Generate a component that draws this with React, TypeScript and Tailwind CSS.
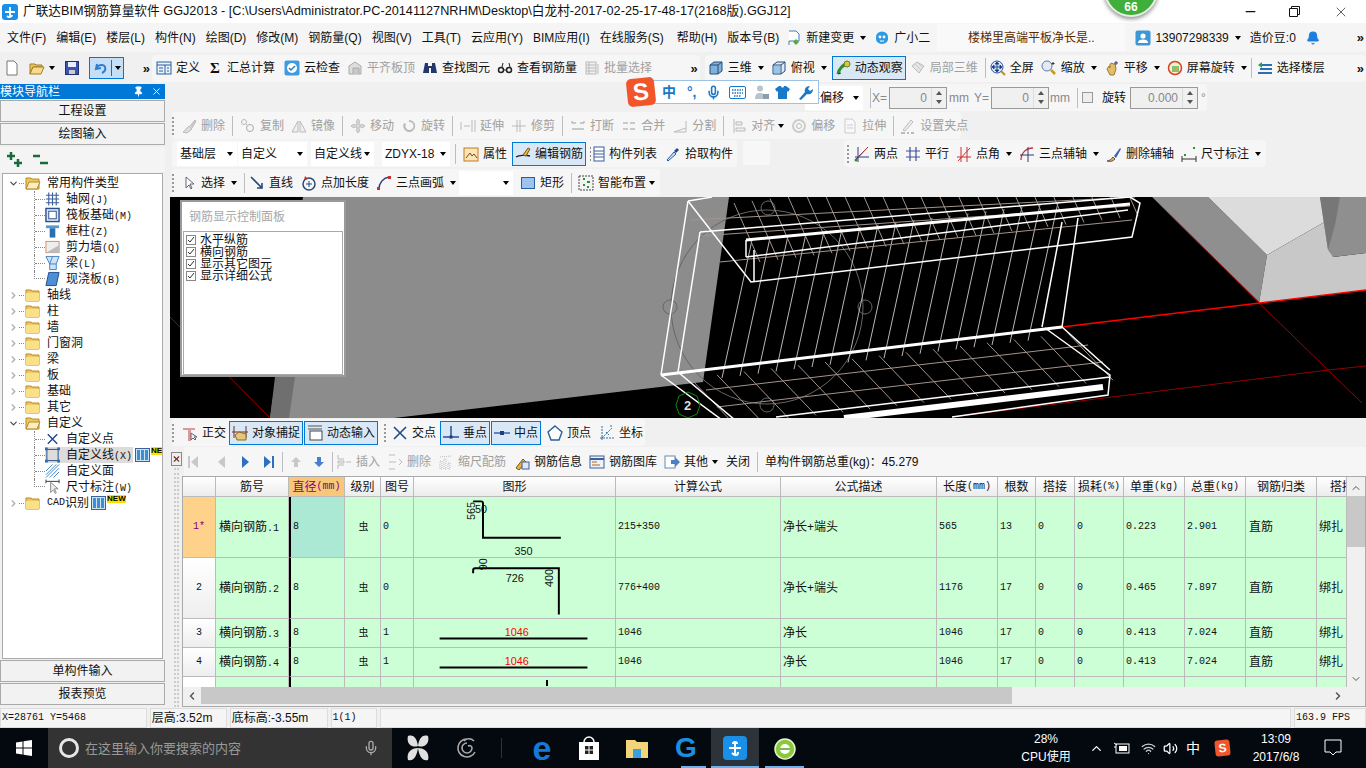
import type { ReactNode } from "react";
import { X, Minus, Pin, ChevronRight, ChevronDown, ChevronUp, ChevronLeft, Mic, Bell, Wifi, Volume2 } from "lucide-react";

const ic: Record<string, ReactNode> = {
  new: <path d="M3 1h7l3 3v11H3z" fill="#fff" stroke="#777" />,
  open: <><path d="M1 4h5l1 1h6v2H4l-3 7z" fill="#e9c46a" stroke="#a67c1e" /><path d="M4 7h11l-3 7H1z" fill="#f6dc8c" stroke="#a67c1e" /></>,
  save: <><rect x="1.5" y="1.5" width="13" height="13" fill="#3a55b0" stroke="#1f2f70" /><rect x="4" y="2" width="8" height="5" fill="#e8eefc" /><rect x="5" y="10" width="6" height="4" fill="#ccc" /></>,
  undo: <path d="M4 4l-1 5 5-1M3.5 8.5C5 4 11 4 12 7c1 3-1 5-3 6" fill="none" stroke="#2f7fd0" strokeWidth="2" />,
  def: <><rect x="1" y="2" width="14" height="12" fill="#eaf2fb" stroke="#2a5f9e" /><path d="M1 5h14M9 5v9M3 8h4M3 11h4M11 8h2M11 11h2" stroke="#2a5f9e" /></>,
  cloud: <><rect x="0.5" y="0.5" width="15" height="15" rx="2" fill="#3f9be0" /><circle cx="8" cy="8" r="5" fill="#fff" /><path d="M5 8l2 2 4-4" fill="none" stroke="#2a7fc0" strokeWidth="1.5" /></>,
  alignG: <><path d="M2 14V6l6-4 6 4v8z" fill="#ddd" stroke="#aaa" /><path d="M6 14V8h6v6" fill="#c8c8c8" stroke="#aaa" /></>,
  binoc: <><path d="M3 3h3v3h4V3h3l2 10H9V8H7v5H1z" fill="#24386e" /></>,
  glasses: <><circle cx="4" cy="10" r="2.5" fill="none" stroke="#222" strokeWidth="1.5" /><circle cx="12" cy="10" r="2.5" fill="none" stroke="#222" strokeWidth="1.5" /><path d="M6.5 10h3M5 7l1-4M13 7l-1-4" stroke="#222" /></>,
  batch: <><rect x="2" y="2" width="10" height="12" fill="#eee" stroke="#bbb" /><path d="M2 5h10M2 8h10M2 11h10M5 2v12M14 4v10" stroke="#bbb" /></>,
  cube: <><path d="M2 5l4-3h8v9l-4 3H2z" fill="#7fb2da" stroke="#284d78" /><path d="M2 5h8v9M10 5l4-3" fill="none" stroke="#284d78" /></>,
  top: <><path d="M2 5l4-3h8v9l-4 3H2z" fill="#dcebf7" stroke="#284d78" /><path d="M2 5h8v9M10 5l4-3" fill="none" stroke="#284d78" /><path d="M3 6h6v7H3z" fill="#9cc4e4" /></>,
  orbit: <><path d="M3 14c1-5 5-9 10-11" fill="none" stroke="#2f8f2f" strokeWidth="3" /><circle cx="12" cy="4" r="3" fill="#d6c93a" stroke="#6b7a1e" /><path d="M3 14l3-1" stroke="#143" /></>,
  local: <><path d="M2 6l5-4 7 4-5 7z" fill="#e5e5e5" stroke="#bbb" /><path d="M5 4l6 6M8 3l5 5" stroke="#ccc" /></>,
  full: <><circle cx="7" cy="7" r="6" fill="#dbe7f7" stroke="#2a4f9a" /><path d="M7 2v10M2 7h10M7 2L5 4h4zM7 12l-2-2h4zM2 7l2-2v4zM12 7l-2-2v4z" stroke="#2a4f9a" /><path d="M11 11l4 4" stroke="#c88a1e" strokeWidth="2" /></>,
  zoom: <><circle cx="6" cy="6" r="5" fill="#e4eaf3" stroke="#5a7ca8" /><path d="M10 10l4 4" stroke="#c89a1e" strokeWidth="2.5" /><path d="M12 2v3M10.5 3.5h3" stroke="#333" /></>,
  pan: <><path d="M3 9l2-3 1 2V4l2-1 1 1 2 0 1 5-2 6H6z" fill="#e3bd6e" stroke="#9a7a30" /><path d="M12 1v4M10 3h4" stroke="#2a3f7a" /></>,
  rot: <><circle cx="8" cy="8" r="6.5" fill="#f6f2c4" stroke="#d8402a" strokeWidth="1.5" /><rect x="5" y="6" width="7" height="6" fill="#7cc47c" /><path d="M9 7l2 2-4 2z" fill="#e8a23a" /></>,
  layer: <><path d="M1 13h14M3 9h12M5 5h10" stroke="#2a6fb0" strokeWidth="2" /><path d="M5 2L1 5l4 3z" fill="#2f9f4f" /></>,
  docG: <><path d="M3 1h7l3 3v7H3v4" fill="#fff" stroke="#3d7fc2" /><path d="M7 12l3-3 3 3-3 3z" fill="#5aa93a" /></>,
  bot: <><path d="M2 7a6 5.5 0 0 1 12 0v2a6 5 0 0 1-12 0z" fill="#2d9be3" /><circle cx="6" cy="7" r="1.4" fill="#fff" /><circle cx="10" cy="7" r="1.4" fill="#fff" /><path d="M6 11h4" stroke="#fff" /></>,
  user: <><rect x="0.5" y="0.5" width="15" height="15" rx="2" fill="#3d96d6" /><circle cx="8" cy="6" r="2.6" fill="#fff" /><path d="M3 13c0-3 3-3.5 5-3.5s5 .5 5 3.5z" fill="#fff" /></>,
  del: <><path d="M2 14l6-6 3 3-5 4z" fill="#ddd" stroke="#bbb" /><path d="M9 8l5-6 1 1-4 7" fill="#ccc" stroke="#bbb" /></>,
  copy: <><circle cx="4" cy="4" r="2.5" fill="none" stroke="#bbb" /><circle cx="10" cy="10" r="3.5" fill="none" stroke="#aaa" /><path d="M6 6l2 2" stroke="#bbb" /></>,
  mirror: <><path d="M7 3v11H1zM9 3v11h6z" fill="#eee" stroke="#bbb" /></>,
  move: <path d="M8 1l2 3H9v3h3V6l3 2-3 2V9H9v3h1l-2 3-2-3h1V9H4v1L1 8l3-2v1h3V4H6z" fill="#ddd" stroke="#bbb" />,
  rotG: <path d="M8 2a6 6 0 1 1-5 3l2 1a4 4 0 1 0 3-2z" fill="#bbb" />,
  extend: <path d="M1 4v8M4 8h6M12 2v12M15 2v12" stroke="#bbb" fill="none" />,
  trim: <path d="M1 8h14M6 2v12M9 2v12" stroke="#bbb" fill="none" />,
  breakI: <path d="M2 5h4M10 5h4M2 11h12M2 5V3M14 5V3" stroke="#bbb" strokeWidth="1.5" fill="none" />,
  merge: <path d="M2 5h5M9 5h5M2 11h5M9 11h5" stroke="#bbb" strokeWidth="1.5" fill="none" />,
  split: <path d="M2 14l12-4M2 14h12V3" stroke="#bbb" fill="none" />,
  alignL: <path d="M3 1v14M5 4h6v3H5zM5 10h9v3H5z" stroke="#bbb" fill="#eee" />,
  offs: <><circle cx="8" cy="8" r="6" fill="none" stroke="#ccc" strokeWidth="2" /><circle cx="8" cy="8" r="2.5" fill="none" stroke="#bbb" /></>,
  stretch: <path d="M3 1h7l3 3v11H3zM5 7h6M5 10h6" stroke="#ccc" fill="#f8f8f8" />,
  grips: <><path d="M3 12l8-10 2 2-8 9z" fill="#eee" stroke="#bbb" /><path d="M1 15h4M7 15h2M11 15h3" stroke="#bbb" strokeWidth="2" /></>,
  prop: <><rect x="1" y="2" width="14" height="13" fill="#fbe6b8" stroke="#c07a1e" /><path d="M3 12l4-5 2 3 2-2 3 4" fill="none" stroke="#7a4a10" /></>,
  edit: <><path d="M1 11c3-2 10-2 14-1" fill="none" stroke="#222" strokeWidth="1.5" /><path d="M8 9l5-7 2 1-4 7z" fill="#e2b53c" stroke="#7a5a10" /></>,
  list: <><path d="M1 2h2M1 6h2M1 10h2M1 14h2" stroke="#666" strokeWidth="1.5" strokeDasharray="1 1" /><rect x="5" y="1" width="10" height="14" fill="#fff" stroke="#3d5f9a" /><path d="M5 5h10M5 8h10M5 11h10" stroke="#3d5f9a" /></>,
  pick: <><path d="M2 14l7-8 2 2-8 7z" fill="#cfe3f7" stroke="#2a5f9e" /><path d="M9 5l3-3 2 2-3 3z" fill="#1f4a8a" /></>,
  two: <><path d="M1 14L14 1M1 11h14M4 1v15" stroke="#2a3f7a" /><path d="M1 15L13 2" stroke="#c83030" /><circle cx="2" cy="14" r="1.5" fill="#2f8f2f" /></>,
  para: <path d="M1 5h14M1 11h14M5 1v14M11 1v14" stroke="#3d4f9a" strokeWidth="1.2" fill="none" />,
  ang: <path d="M1 11h14M5 1v15M11 1v15M2 15L14 2" stroke="#c83030" strokeWidth="1" fill="none" />,
  arc3: <><path d="M2 14C2 7 7 2 14 2" stroke="#c83030" fill="none" strokeWidth="1.3" /><path d="M1 9h14M9 1v15" stroke="#2a3f7a" /></>,
  delAx: <><path d="M1 15c3 0 4-2 6-4l2 2c-2 2-4 3-8 2z" fill="#e6b04a" stroke="#555" /><path d="M8 10l6-8 1 1-5 9z" fill="#3a64b0" /></>,
  dim: <><path d="M1 13h14M1 10v6M15 10v6" stroke="#333" /><rect x="3" y="8" width="2" height="2" fill="#2f8f2f" /><rect x="12" y="1" width="2" height="2" fill="#2f8f2f" /></>,
  pointer: <path d="M5 2v11l3-3 2 4 1-1-2-4h4z" fill="#fff" stroke="#667" />,
  line: <path d="M2 2l11 11M13 8v5H8" stroke="#234a7a" strokeWidth="1.6" fill="none" />,
  addLen: <><circle cx="8" cy="9" r="6" fill="none" stroke="#234a7a" strokeWidth="1.5" /><path d="M5 9h6M8 6v6" stroke="#234a7a" /><path d="M4 1l3 3-4 1z" fill="#c83030" /></>,
  arc: <><path d="M3 14C3 8 7 3 13 2" stroke="#2a3f7a" fill="none" strokeWidth="1.5" /><rect x="1" y="12" width="3" height="3" fill="#c83030" /><rect x="12" y="1" width="3" height="3" fill="#c83030" /></>,
  rect: <rect x="1.5" y="2.5" width="13" height="11" fill="#9dc3ee" stroke="#2a5f9e" />,
  smart: <><rect x="1" y="1" width="14" height="14" fill="#f3f3f3" stroke="#444" strokeDasharray="2 1" /><path d="M5 4h2M9 7h3M5 10h2M9 12h2" stroke="#2f8f2f" strokeWidth="2" /></>,
  ortho: <><path d="M1 3h12v2H9v11H6V5H1z" fill="#d99a9a" /><path d="M9 8v7l2-2 2 2 1-1-2-2h3z" fill="#eef" stroke="#667" /></>,
  snap: <><path d="M2 1v12M14 1v12M0 7h16" stroke="#7a2a20" /><path d="M3 10l4-3 7 2v6H5z" fill="#e5c67a" stroke="#8a6a20" /></>,
  dyn: <><path d="M1 4h14M1 1h14" stroke="#555" /><rect x="3" y="6" width="12" height="9" fill="#fff" stroke="#444" /></>,
  cross: <path d="M2 2l12 12M14 2L2 14" stroke="#1f4a8a" strokeWidth="1.6" />,
  perp: <><path d="M0 12h16" stroke="#2a4f9a" strokeWidth="1.5" /><path d="M8 1v11" stroke="#2a4f9a" strokeWidth="1.5" /><rect x="6.5" y="10.5" width="3" height="3" fill="#1f3f7a" /></>,
  mid: <><path d="M0 8h16" stroke="#3a64b0" strokeWidth="1.5" /><rect x="6" y="6" width="4" height="4" fill="#1f3f7a" /></>,
  vertex: <path d="M8 1l7 6-3 8H4L1 7z" fill="#fff" stroke="#2a5f9e" strokeWidth="1.4" />,
  coord: <path d="M3 1v14M1 13h14M3 13L13 3M11 1h3M7 7l3 3" stroke="#2a6fb0" strokeDasharray="2 1" fill="none" />,
  info: <><path d="M2 14l7-9 3 3-7 8z" fill="#e5b04a" stroke="#7a5a10" /><rect x="8" y="8" width="7" height="7" fill="#dde8f5" stroke="#3d5f9a" /></>,
  lib: <><rect x="1" y="2" width="14" height="12" fill="#eaf2fb" stroke="#3d5f9a" /><path d="M1 5h14" stroke="#3d5f9a" strokeWidth="2" /><path d="M3 8h5M3 11h8" stroke="#b5651d" /></>,
  other: <><rect x="1" y="2" width="10" height="12" fill="#fff" stroke="#6b8ab0" /><path d="M7 6h4V3l5 5-5 5v-3H7z" fill="#4a7fc0" /></>,
  ins: <path d="M2 1v4h6M2 15v-4h6M10 8h5M2 7h6v2H2z" stroke="#bbb" fill="none" />,
  rem: <path d="M2 1h6M2 15h6M2 8h7M12 5l3 3-3 3" stroke="#bbb" fill="none" />,
  scale: <path d="M2 15V7h2v8zM6 15V5h2v10zM10 15V9h2v6zM2 3l11-1" stroke="#bbb" fill="none" strokeDasharray="1 1" />,
};

const Ic = ({ n }: { n: string }) => (
  <svg width="16" height="16" viewBox="0 0 16 16" className="shrink-0">{ic[n]}</svg>
);

const Caret = ({ className = "" }: { className?: string }) => (
  <span className={`inline-block shrink-0 border-x-[3px] border-t-[4px] border-x-transparent border-t-black ${className}`} />
);

const Sep = ({ className = "" }: { className?: string }) => <span className={`h-[20px] w-px shrink-0 bg-[#bdbdbd] ${className}`} />;

const Grip = ({ className = "" }: { className?: string }) => <span className={`h-[18px] w-[3px] shrink-0 border-l-2 border-dotted border-[#999] ${className}`} />;

function T({ i, t, off, on, caret, tight, className = "" }: { i?: string; t: string; off?: boolean; on?: boolean; caret?: boolean; tight?: boolean; className?: string }) {
  return (
    <div
      className={`flex shrink-0 items-center gap-[4px] whitespace-nowrap ${off ? "text-[#a0a0a0]" : "text-[#111]"} ${on ? "h-[24px] border border-[#0078d7] bg-[#d9e8f6] px-[2px]" : ""} ${className}`}
    >
      {i && <Ic n={i} />}
      <span>{t}</span>
      {caret && <Caret className={tight ? "-ml-[1px]" : "ml-[2px]"} />}
    </div>
  );
}

function Bar({ children, className = "" }: { children: ReactNode; className?: string }) {
  return <div className={`flex h-[27px] items-center gap-[7px] rounded-sm bg-[#f6f6f6] ${className}`}>{children}</div>;
}

function Select({ w, t }: { w: string; t?: string }) {
  return (
    <div className={`flex h-[24px] shrink-0 items-center justify-between bg-white pl-[3px] pr-[4px] ${w}`}>
      <span className="whitespace-nowrap">{t}</span>
      <Caret />
    </div>
  );
}

function Num({ w, v }: { w: string; v: string }) {
  return (
    <div className={`flex h-[22px] shrink-0 items-center justify-end border border-[#999] bg-[#f0f0f0] text-[#888] ${w}`}>
      <span className="mr-[4px]">{v}</span>
      <span className="flex h-full w-[15px] flex-col items-center justify-center gap-[5px] border-l border-[#ddd]">
        <span className="border-x-[3px] border-b-[4px] border-x-transparent border-b-[#555]" />
        <span className="border-x-[3px] border-t-[4px] border-x-transparent border-t-[#555]" />
      </span>
    </div>
  );
}

const mono = "font-['Liberation_Mono','Noto_Sans_CJK_SC',monospace] text-[10px]";

function Folder({ open }: { open?: boolean }) {
  return (
    <svg width="16" height="16" viewBox="0 0 16 16" className="shrink-0">
      <path d="M1 3h5l1 1h7v10H1z" fill="#f0c85a" stroke="#b58a2a" />
      {open ? <path d="M4 7h11l-3 7H1z" fill="#fbeec0" stroke="#b58a2a" /> : <path d="M1 6h13v8H1z" fill="#f9e08c" />}
    </svg>
  );
}

function GridBadge() {
  return (
    <span className="ml-[2px] flex h-[14px] w-[15px] shrink-0 gap-px border border-[#3d5f9a] bg-[#cfe3f7] p-[1px]">
      <span className="flex-1 bg-[#3d8fd0]" />
      <span className="flex-1 bg-[#3d8fd0]" />
      <span className="flex-1 bg-[#3d8fd0]" />
    </span>
  );
}

function Branch({ label, open, children }: { label: ReactNode; open?: boolean; children?: ReactNode }) {
  return (
    <div>
      <div className="flex h-[16px] items-center">
        {open ? <ChevronDown size={11} className="ml-[5px] text-[#444]" strokeWidth={2.5} /> : <ChevronRight size={11} className="ml-[5px] text-[#aaa]" strokeWidth={2.5} />}
        <span className="mr-[1px] w-[5px] border-t border-dotted border-[#888]" />
        <Folder open={open} />
        <span className="ml-[6px] flex items-center whitespace-nowrap">{label}</span>
      </div>
      {children}
    </div>
  );
}

function Leaf({ n, t, k, last, sel, after }: { n: ReactNode; t: string; k?: string; last?: boolean; sel?: boolean; after?: ReactNode }) {
  return (
    <div className="flex h-[16px] items-center pl-[31px]">
      {last ? (
        <span className="h-[8px] w-[11px] shrink-0 self-start border-b border-l border-dotted border-[#888]" />
      ) : (
        <span className="h-full w-[11px] shrink-0 border-l border-dotted border-[#888]">
          <span className="mt-[8px] block border-t border-dotted border-[#888]" />
        </span>
      )}
      <div className={`flex h-full items-center ${sel ? "bg-[#dcdcdc]" : ""}`}>
        <span className="w-[15px] shrink-0">{n}</span>
        <span className="ml-[6px] whitespace-nowrap pr-[1px]">
          {t}
          {k && <span className={mono}>({k})</span>}
        </span>
      </div>
      {after}
    </div>
  );
}

const leafIc: Record<string, ReactNode> = {
  grid: <path d="M1 4h14M1 8h14M1 12h14M4 1v14M8 1v14M12 1v14" stroke="#3d5f9a" strokeWidth="1.2" />,
  raft: <><rect x="1" y="1" width="14" height="14" fill="#d4e6f7" stroke="#2a4f8a" strokeWidth="1.5" /><rect x="4" y="4" width="8" height="8" fill="#fff" stroke="#2a4f8a" /></>,
  col: <><path d="M1 2h14v3H1z" fill="#5a96d0" /><path d="M5 5h6v10H5z" fill="#2a6fb0" /></>,
  wall: <><rect x="1" y="2" width="14" height="12" fill="#eee" stroke="#d9895a" /><path d="M1 14l14-8v8z" fill="#bbb" /></>,
  beam: <><path d="M1 1h14l-3 8v6H5V9z" fill="#cfe3f7" stroke="#3d7fc2" /><path d="M5 9h7M8 1l-3 8" stroke="#3d7fc2" /></>,
  slab: <path d="M4 1h11l-3 14H1z" fill="#4d8fd6" stroke="#1f4a8a" />,
  pt: <path d="M3 3l10 10M13 3L3 13" stroke="#1f4a8a" strokeWidth="1.5" />,
  ln: <><rect x="2" y="2" width="12" height="12" fill="none" stroke="#1f4a8a" /><path d="M0 0h3v3H0zM13 0h3v3h-3zM0 13h3v3H0zM13 13h3v3h-3z" fill="#2a6fb0" /></>,
  face: <path d="M1 8l7-7M1 12L12 1M1 15L15 1M5 15L15 5M9 15l6-6" stroke="#3d7fc2" />,
  dm: <><path d="M1 2h14M1 0v4M15 0v4" stroke="#333" /><path d="M6 3v11l3-3 2 4 1-1-2-4h4z" fill="#eee" stroke="#888" /></>,
};
const L = ({ n }: { n: string }) => <svg width="15" height="16" viewBox="0 0 16 16">{leafIc[n]}</svg>;

const NewTag = ({ t }: { t: string }) => (
  <span className="mb-[8px] ml-[1px] overflow-hidden bg-[#ffe000] text-[8px] font-bold leading-[8px] text-black">{t}</span>
);

function Nav() {
  const btn = "flex h-[22px] shrink-0 items-center justify-center border border-[#aaa] bg-[#f2f2f2]";
  return (
    <div className="flex h-full w-[165px] shrink-0 flex-col gap-[1px] pb-[2px]">
      <div className="flex h-[15px] items-center justify-between bg-[#0078d7] pr-[3px] text-white">
        <span>模块导航栏</span>
        <span className="flex items-center gap-[7px]">
          <Pin size={11} fill="#fff" />
          <X size={11} />
        </span>
      </div>
      <div className={btn}>工程设置</div>
      <div className={btn}>绘图输入</div>
      <div className="mt-[1px] flex h-[25px] items-center gap-[8px] bg-[#f4f4f4] pl-[6px]">
        <svg width="18" height="16" viewBox="0 0 18 16"><path d="M1 4h8M5 0v8M8 11h8M12 7v8" stroke="#1a6b3a" strokeWidth="2.5" /></svg>
        <svg width="18" height="16" viewBox="0 0 18 16"><path d="M1 4h7M8 11h8" stroke="#1a6b3a" strokeWidth="2.5" /></svg>
      </div>
      <div className="mx-[2px] min-h-0 flex-1 overflow-hidden border border-[#aaa] bg-white pt-[1px]">
        <Branch label="常用构件类型" open />
        <Leaf n={<L n="grid" />} t="轴网" k="J" />
        <Leaf n={<L n="raft" />} t="筏板基础" k="M" />
        <Leaf n={<L n="col" />} t="框柱" k="Z" />
        <Leaf n={<L n="wall" />} t="剪力墙" k="Q" />
        <Leaf n={<L n="beam" />} t="梁" k="L" />
        <Leaf n={<L n="slab" />} t="现浇板" k="B" last />
        {["轴线", "柱", "墙", "门窗洞", "梁", "板", "基础", "其它"].map((x) => (
          <Branch key={x} label={x} />
        ))}
        <Branch label="自定义" open />
        <Leaf n={<L n="pt" />} t="自定义点" />
        <Leaf n={<L n="ln" />} t="自定义线" k="X" sel after={<><GridBadge /><NewTag t="NE" /></>} />
        <Leaf n={<L n="face" />} t="自定义面" />
        <Leaf n={<L n="dm" />} t="尺寸标注" k="W" last />
        <Branch label={<><span className={mono}>CAD</span>识别<GridBadge /><NewTag t="NEW" /></>} />
      </div>
      <div className={btn}>单构件输入</div>
      <div className={btn}>报表预览</div>
    </div>
  );
}

function Scene() {
  const wire = "#fff";
  const tan = "#a3948b";
  return (
    <svg className="block h-[221px] w-full" viewBox="170 197 1196 221" preserveAspectRatio="none">
      <rect x="170" y="197" width="1196" height="221" fill="#000" />
      <path d="M303 197H729L703 382L394 418H270z" fill="#8c8c8c" />
      <path d="M275 377L270 418H289L295 377z" fill="#6f6f6f" />
      <path d="M1152 197H1208L1267 255L1259 303z" fill="#8f8f8f" />
      <path d="M1208 197H1320L1328 220L1267 255z" fill="#dcdcdc" />
      <path d="M1267 255L1328 220L1333 257L1366 253V290L1259 303z" fill="#c8c8c8" />
      <path d="M1320 197H1366V253L1333 257L1328 250z" fill="#8f8f8f" />
      <path d="M1320 197H1340L1335 225L1328 250z" fill="#777" />
      <path d="M170 317L270 418" stroke="#a00000" />
      <path d="M1152 197L1259 303L1362 403" stroke="#a00000" />
      <path d="M952 417L1328 370L1366 366" stroke="#900000" />
      <path d="M1062 327L1366 290" stroke="#ff0000" strokeWidth="1.5" />

      <g stroke="#666" fill="none">
        <ellipse cx="767" cy="307" rx="96" ry="97" />
        <circle cx="670" cy="307" r="7" />
        <circle cx="865" cy="307" r="7" />
        <circle cx="767" cy="405" r="7" />
        <circle cx="768" cy="208" r="7" />
      </g>

      <g stroke="#bdb6b1">
        {Array.from({ length: 18 }, (_, i) => (
          <line key={i} x1={722 + i * 18} y1={378 - i * 2.2} x2={752 + i * 18} y2={240 - i * 2.2} />
        ))}
      </g>
      <g stroke={tan}>
        {Array.from({ length: 22 }, (_, i) => (
          <line key={i} x1={734 + i * 18} y1={203 - i * 2.2} x2={760 + i * 18} y2={262 - i * 2.2} />
        ))}
        {Array.from({ length: 15 }, (_, i) => (
          <line key={i} x1={690 + i * 27} y1={378 - i * 3.2} x2={735 + i * 27} y2={425 - i * 3.2} />
        ))}
        <line x1="690" y1="220" x2="1135" y2="197" />
        <line x1="700" y1="236" x2="1130" y2="206" />
        <line x1="720" y1="262" x2="1132" y2="220" />
        <line x1="706" y1="390" x2="1088" y2="345" />
        <line x1="717" y1="407" x2="1103" y2="362" />
      </g>
      <g stroke={wire} fill="none" strokeWidth="1.5">
        <path d="M688 201L661 375M700 232L678 372M1062 222L1042 327M1078 218L1062 327" />
        <path d="M688 201L751 282L1132 237L1140 203L1130 197M688 201L712 197" />
        <path d="M700 232L1130 197M746 257L1128 210M754 250V282" />
        <path d="M746 240V257" />
        <path d="M1045 328L1110 375L1108 395L952 417M1062 327L1110 370M661 375L722 420M678 372L735 420M1110 377L776 417" />
      </g>
      <g stroke={wire} fill="none">
        <path d="M661 375L1062 327" strokeWidth="3" />
        <path d="M746 240L1130 204" strokeWidth="3" />
        <path d="M1103 387L844 418" strokeWidth="6" />
      </g>
      <polygon points="688,392 697,396 700,405 697,414 688,418 679,414 676,405 679,396" fill="none" stroke="#0a8a0a" />
      <text x="684" y="410" fill="#ddd" fontSize="13" fontFamily="Liberation Sans" fontWeight="bold">2</text>
    </svg>
  );
}

const cols = [
  ["", 0], ["筋号", 0], ["直径(mm)", 1], ["级别", 0], ["图号", 0], ["图形", 0], ["计算公式", 0], ["公式描述", 0],
  ["长度(mm)", 0], ["根数", 0], ["搭接", 0], ["损耗(%)", 0], ["单重(kg)", 0], ["总重(kg)", 0], ["钢筋归类", 0], ["搭接", 0],
] as const;

function HeadLabel({ t }: { t: string }) {
  const m = t.match(/^(.+?)(\(.+\))$/);
  if (!m) return <>{t}</>;
  return <>{m[1]}<span className={mono}>{m[2]}</span></>;
}

function Shape({ k }: { k: number }) {
  const common = { fontFamily: "Liberation Sans", fontSize: 11, fill: "#111" };
  if (k === 0)
    return (
      <svg width="202" height="60" viewBox="414 497 202 60" className="block">
        <path d="M472 501H480Q482 501 482 503V538H561" fill="none" stroke="#000" strokeWidth="2" />
        <text x="514" y="555.500" {...common}>350</text>
        <text x="474" y="513" {...common}>50</text>
        <text {...common} transform="translate(474 520) rotate(-90)">565</text>
      </svg>
    );
  if (k === 1)
    return (
      <svg width="202" height="60" viewBox="414 558 202 60" className="block">
        <path d="M472 573V570Q472 568 474 568H559V615" fill="none" stroke="#000" strokeWidth="2" />
        <text x="505" y="582" {...common}>726</text>
        <text {...common} transform="translate(486 570) rotate(-90)">90</text>
        <text {...common} transform="translate(553 587) rotate(-90)">400</text>
      </svg>
    );
  if (k === 2 || k === 3)
    return (
      <svg width="202" height="28" viewBox="414 619 202 28" className="block">
        <path d="M438 638.500H588" stroke="#000" strokeWidth="2" />
        <text x="504" y="636" {...common} fill="#f00">1046</text>
      </svg>
    );
  return (
    <svg width="202" height="9" viewBox="414 677 202 9" className="block">
      <path d="M547 680V686" stroke="#000" strokeWidth="2" />
    </svg>
  );
}

const rows = [
  { id: "1*", name: "横向钢筋.1", tu: "0", f: "215+350", d: "净长+端头", len: "565", n: "13", w: "0.223", tw: "2.901" },
  { id: "2", name: "横向钢筋.2", tu: "0", f: "776+400", d: "净长+端头", len: "1176", n: "17", w: "0.465", tw: "7.897" },
  { id: "3", name: "横向钢筋.3", tu: "1", f: "1046", d: "净长", len: "1046", n: "17", w: "0.413", tw: "7.024" },
  { id: "4", name: "横向钢筋.4", tu: "1", f: "1046", d: "净长", len: "1046", n: "17", w: "0.413", tw: "7.024" },
];

function Cell({ children, className = "" }: { children?: ReactNode; className?: string }) {
  return <div className={`flex items-center overflow-hidden whitespace-nowrap border-b border-r border-[#bbb] pl-[2px] ${className}`}>{children}</div>;
}

function RebarTable() {
  return (
    <div className="grid h-[210px] grid-cols-[33px_73px_56px_36px_33px_202px_165px_156px_61px_38px_39px_49px_61px_61px_71px_30px] grid-rows-[20px_61px_61px_29px_29px_10px] overflow-hidden bg-white">
      {cols.map(([t, hl], i) => (
        <div
          key={i}
          className={`flex items-center overflow-hidden whitespace-nowrap border-b border-r border-[#bbb] ${i === 15 ? "justify-start pl-[13px]" : "justify-center"} ${hl ? "bg-[#f8c878] text-[#800080]" : "bg-gradient-to-b from-white to-[#ececec]"}`}
        >
          <HeadLabel t={t} />
        </div>
      ))}
      {rows.map((r, i) => (
        <div key={r.id} className="contents">
          <div className={`flex items-center justify-center border-b border-r border-[#bbb] ${i === 0 ? "bg-[#ffd28c] text-[#800080]" : "bg-gradient-to-b from-white to-[#eee]"} ${mono}`}>{r.id}</div>
          <Cell className="bg-[#ccffd6]"><span className="ml-[1px]">{r.name.slice(0, 4)}<span className={mono}>{r.name.slice(4)}</span></span></Cell>
          <Cell className={`border-l-2 border-l-black ${i === 0 ? "bg-[#abe9d4]" : "bg-[#ccffd6]"} ${mono}`}>8</Cell>
          <Cell className="justify-center bg-[#ccffd6] pl-0 text-[10px]">虫</Cell>
          <Cell className={`bg-[#ccffd6] ${mono}`}>{r.tu}</Cell>
          <Cell className="bg-[#ccffd6] pl-0"><Shape k={i} /></Cell>
          <Cell className={`bg-[#ccffd6] ${mono}`}>{r.f}</Cell>
          <Cell className="bg-[#ccffd6]">{r.d}</Cell>
          <Cell className={`bg-[#ccffd6] ${mono}`}>{r.len}</Cell>
          <Cell className={`bg-[#ccffd6] ${mono}`}>{r.n}</Cell>
          <Cell className={`bg-[#ccffd6] ${mono}`}>0</Cell>
          <Cell className={`bg-[#ccffd6] ${mono}`}>0</Cell>
          <Cell className={`bg-[#ccffd6] ${mono}`}>{r.w}</Cell>
          <Cell className={`bg-[#ccffd6] ${mono}`}>{r.tw}</Cell>
          <Cell className="bg-[#ccffd6]"><span className="ml-[1px]">直筋</span></Cell>
          <Cell className="bg-[#ccffd6]">绑扎</Cell>
        </div>
      ))}
      <div className="border-r border-[#bbb] bg-white" />
      <div className="border-r border-[#bbb] bg-[#ccffd6]" />
      <div className="border-l-2 border-r border-[#bbb] border-l-black bg-[#ccffd6]" />
      <div className="border-r border-[#bbb] bg-[#ccffd6]" />
      <div className="border-r border-[#bbb] bg-[#ccffd6]" />
      <div className="border-r border-[#bbb] bg-[#ccffd6]"><Shape k={4} /></div>
      {Array.from({ length: 10 }, (_, i) => (
        <div key={i} className="border-r border-[#bbb] bg-[#ccffd6]" />
      ))}
    </div>
  );
}

function GridPanel() {
  return (
    <div className="flex h-[260px] bg-[#f0f0f0]">
      <div className="flex w-[12px] shrink-0 flex-col items-center pt-[5px]">
        <span className="flex h-[14px] w-[11px] items-center justify-center border border-[#888] bg-[#eee]"><X size={10} className="text-[#7a2a2a]" strokeWidth={3} /></span>
        <span className="mt-[2px] w-[5px] flex-1 border-x-2 border-dotted border-[#ccc]" />
      </div>
      <div className="flex min-w-0 flex-1 flex-col">
        <div className="ml-[2px] flex h-[29px] items-center gap-[7px] bg-[#f6f6f6] pl-[3px] pt-[1px]">
          <svg width="12" height="14" viewBox="0 0 12 14"><path d="M1 1h2v12H1zM11 1v12L4 7z" fill="#c8c8c8" /></svg>
          <svg width="12" height="14" viewBox="0 0 12 14" className="ml-[9px]"><path d="M10 1v12L3 7z" fill="#c8c8c8" /></svg>
          <svg width="12" height="14" viewBox="0 0 12 14" className="ml-[5px]"><path d="M3 1v12l7-6z" fill="#2f6fc0" /></svg>
          <svg width="12" height="14" viewBox="0 0 12 14" className="ml-[5px]"><path d="M1 1v12l7-6zM9 1h2v12H9z" fill="#2f6fc0" /></svg>
          <Sep />
          <svg width="12" height="12" viewBox="0 0 12 12"><path d="M6 1l5 5H8v5H4V6H1z" fill="#c8c8c8" /></svg>
          <svg width="12" height="12" viewBox="0 0 12 12" className="ml-[4px]"><path d="M6 11l5-5H8V1H4v5H1z" fill="#4a7fd0" /></svg>
          <Sep />
          <T i="ins" t="插入" off className="-ml-[4px]" />
          <T i="rem" t="删除" off />
          <T i="scale" t="缩尺配筋" off />
          <T i="info" t="钢筋信息" className="ml-[1px]" />
          <T i="lib" t="钢筋图库" />
          <div className="flex items-center gap-[4px]"><Ic n="other" /><span>其他</span><Caret /></div>
          <span className="ml-[1px]">关闭</span>
          <Sep />
          <span className="whitespace-nowrap">单构件钢筋总重(kg)：45.279</span>
        </div>
        <div className="flex min-h-0 flex-1 flex-col border border-[#aaa]">
          <div className="flex">
            <RebarTable />
            <div className="flex h-[210px] w-[18px] shrink-0 flex-col items-center bg-[#f0f0f0]">
              <ChevronUp size={12} className="mt-[5px] text-[#555]" />
              <span className="mt-[2px] h-[51px] w-full bg-[#c8c8c8]" />
              <ChevronDown size={12} className="mt-auto mb-[2px] text-[#555]" />
            </div>
          </div>
          <div className="flex h-[17px] items-center bg-[#f0f0f0]">
            <span className="flex w-[18px] justify-center"><ChevronLeft size={12} className="text-[#555]" strokeWidth={3} /></span>
            <span className="h-full w-[811px] bg-[#c8c8c8]" />
            <ChevronRight size={12} className="ml-auto mr-[21px] text-[#555]" strokeWidth={3} />
          </div>
        </div>
      </div>
    </div>
  );
}

function Taskbar() {
  return (
    <div className="flex h-[40px] shrink-0 items-center bg-[#04090f] text-white">
      <div className="flex w-[48px] shrink-0 justify-center">
        <svg width="16" height="16" viewBox="0 0 16 16"><path d="M0 2.500l6.500-1V7.500H0zM7.500 1.300L16 0v7.500H7.500zM0 8.500h6.500v6L0 13.500zM7.500 8.500H16V16l-8.500-1.300z" fill="#fff" /></svg>
      </div>
      <div className="flex h-full w-[344px] shrink-0 items-center bg-[#333] pl-[11px] text-[13px] text-[#999]">
        <span className="h-[20px] w-[20px] shrink-0 rounded-full border-[3px] border-[#e6e6e6]" />
        <span className="ml-[6px] flex-1">在这里输入你要搜索的内容</span>
        <Mic size={16} className="mr-[13px] text-[#aaa]" />
      </div>
      <div className="ml-[14px] flex w-[24px] shrink-0 justify-center">
        <svg width="24" height="26" viewBox="0 0 24 26"><path d="M2 1c6-2 9 3 10 10C6 13 0 9 2 1zM22 1c2 8-4 12-10 10 1-7 4-12 10-10zM2 25c-2-8 4-12 10-12-1 7-4 14-10 12zM22 25c-6 2-9-5-10-12 6 0 12 4 10 12z" fill="#e0e0e0" /></svg>
      </div>
      <div className="ml-[25px] flex w-[24px] shrink-0 justify-center">
        <svg width="22" height="22" viewBox="0 0 22 22"><path d="M11 2a9 9 0 1 0 8 13M11 6a5 5 0 1 0 5 5c0-2-2-3-4-2M18 4c-3-3-8-3-10 0" fill="none" stroke="#aaa" strokeWidth="1.6" /></svg>
      </div>
      <span className="ml-[22px] h-[20px] w-px bg-[#333]" />
      <span className="ml-[27px] w-[26px] text-center font-['Liberation_Sans'] text-[34px] font-bold leading-[30px] text-[#1679d9]">e</span>
      <div className="ml-[21px] flex w-[26px] justify-center">
        <svg width="22" height="26" viewBox="0 0 22 26"><path d="M1 7h20v18H1z" fill="#fff" /><path d="M6 7a5 5 0 0 1 10 0" fill="none" stroke="#fff" strokeWidth="1.5" /><path d="M7 11h3.500v3.500H7zM11.500 11H15v3.500h-3.500zM7 15.500h3.500V19H7zM11.500 15.500H15V19h-3.500z" fill="#222" /></svg>
      </div>
      <div className="ml-[23px] flex w-[24px] justify-center">
        <svg width="22" height="20" viewBox="0 0 22 20"><path d="M0 2h9l2 2h11v16H0z" fill="#f2d578" /><path d="M7 11h8v9H7z" fill="#3a9fe0" /></svg>
      </div>
      <div className="ml-[25px] flex h-full w-[32px] flex-col">
        <span className="flex-1 pl-[1px] pt-[6px] font-['Liberation_Sans'] text-[28px] font-bold leading-[28px] text-[#1a8fe0]">G</span>
        <span className="ml-[7px] h-[2px] bg-[#6cb2ee]" />
      </div>
      <div className="ml-[5px] flex h-full w-[48px] flex-col items-center bg-[#2c333a]">
        <span className="mt-[8px] flex h-[24px] w-[24px] items-center justify-center rounded-[4px] bg-[#1a8fe8]">
          <svg width="16" height="18" viewBox="0 0 16 18"><path d="M8 2v14M2 9h12M5 14c3 3 6 3 6-1M6 5a2 2 0 1 1 4 0" fill="none" stroke="#fff" strokeWidth="2" /></svg>
        </span>
        <span className="mt-auto h-[2px] w-full bg-[#6cb2ee]" />
      </div>
      <div className="ml-[6px] flex h-full w-[39px] flex-col items-center">
        <svg width="26" height="30" viewBox="0 0 26 30" className="mt-[6px]"><circle cx="13" cy="15" r="10" fill="#8ac93a" stroke="#e8f5d0" strokeWidth="1.5" /><ellipse cx="13" cy="15" rx="5" ry="5" fill="#fff" /><path d="M8 15h10" stroke="#5aa020" strokeWidth="1.5" /></svg>
        <span className="mt-auto h-[2px] w-full bg-[#6cb2ee]" />
      </div>
      <div className="ml-[212px] flex w-[60px] shrink-0 flex-col items-center leading-[18px]">
        <span>28%</span>
        <span>CPU使用</span>
      </div>
      <ChevronUp size={15} className="ml-[13px]" />
      <svg width="16" height="14" viewBox="0 0 16 14" className="ml-[10px]"><rect x="2" y="3" width="13" height="9" fill="none" stroke="#fff" /><rect x="5" y="5" width="8" height="5" fill="#fff" /><path d="M0 6h2M0 2l3 2" stroke="#fff" /></svg>
      <Wifi size={15} className="ml-[11px] text-[#ccc]" />
      <Volume2 size={15} className="ml-[7px]" />
      <span className="ml-[8px] text-[14px]">中</span>
      <span className="ml-[15px] flex h-[16px] w-[15px] -rotate-6 items-center justify-center rounded-[3px] bg-[#f0562a] text-[12px] font-bold">S</span>
      <div className="ml-[11px] flex w-[70px] shrink-0 flex-col items-center leading-[18px]">
        <span>13:09</span>
        <span>2017/6/8</span>
      </div>
      <svg width="18" height="18" viewBox="0 0 18 18" className="ml-[13px]"><path d="M1 1h16v12h-5l-3 3-3-3H1z" fill="none" stroke="#fff" /></svg>
    </div>
  );
}

export default function App() {
  return (
    <div className="relative flex h-[768px] w-[1366px] flex-col overflow-hidden bg-[#f0f0f0] font-['Liberation_Sans','Noto_Sans_CJK_SC',sans-serif] text-[12px] leading-none text-[#111]">
      {/* title bar */}
      <div className="flex h-[23px] shrink-0 items-center bg-white pl-[2px]">
        <span className="flex h-[16px] w-[16px] items-center justify-center rounded-[3px] bg-[#1a8fe8]">
          <svg width="12" height="12" viewBox="0 0 12 12"><path d="M6 1v10M1 6h10M3 10c2 2 5 1 5-1" fill="none" stroke="#fff" strokeWidth="1.8" /></svg>
        </span>
        <span className="ml-[5px] whitespace-nowrap text-[12.700px]">广联达BIM钢筋算量软件 GGJ2013 - [C:\Users\Administrator.PC-20141127NRHM\Desktop\白龙村-2017-02-25-17-48-17(2168版).GGJ12]</span>
        <Minus size={15} className="ml-auto mr-[31px]" />
        <svg width="11" height="11" viewBox="0 0 11 11" className="mr-[33px]"><path d="M.5 2.500h8v8h-8zM2.500 2.500v-2h8v8h-2" fill="none" stroke="#111" /></svg>
        <X size={16} strokeWidth={1} className="mr-[17px]" />
      </div>

      {/* menu */}
      <div className="flex h-[29px] shrink-0 items-center gap-[10px] bg-[#f5f5f5] pl-[7px] whitespace-nowrap">
        {["文件(F)", "编辑(E)", "楼层(L)", "构件(N)", "绘图(D)", "修改(M)", "钢筋量(Q)", "视图(V)", "工具(T)", "云应用(Y)", "BIM应用(I)", "在线服务(S)"].map((m) => (
          <span key={m}>{m}</span>
        ))}
        <span className="ml-[3px]">帮助(H)</span>
        <span>版本号(B)</span>
        <T i="docG" t="新建变更" caret className="-ml-[3px]" />
        <T i="bot" t="广小二" className="-ml-[2px]" />
        <div className="-ml-[3px] flex h-[27px] w-[188px] items-center justify-center bg-[#f9f9f9] text-[#5a2a00]">楼梯里高端平板净长是..</div>
        <T i="user" t="13907298339" caret />
        <span className="-ml-[1px]">造价豆:0</span>
        <Bell size={14} fill="#1a7fe0" className="text-[#1a7fe0]" />
        <span className="ml-[27px] text-[13px] font-bold">»</span>
      </div>

      {/* main toolbar */}
      <div className="flex h-[32px] shrink-0 items-center pl-[4px]">
        <div className="flex w-[146px] shrink-0 items-center gap-[9px]">
          <Ic n="new" />
          <div className="flex items-center gap-[4px]"><Ic n="open" /><Caret /></div>
          <Ic n="save" />
          <span className="flex h-[22px] w-[35px] items-center border border-[#0078d7] bg-[#c4dff6]">
            <span className="flex w-[22px] justify-center border-r border-[#0078d7]"><Ic n="undo" /></span>
            <Caret className="ml-[3px]" />
          </span>
          <span className="ml-[10px] text-[13px] font-bold">»</span>
        </div>
        <Bar className="ml-[2px] w-[549px] pl-[4px]">
          <T i="def" t="定义" />
          <div className="ml-[3px] flex items-center gap-[6px]"><span className="w-[11px] font-['Liberation_Serif'] text-[15px] font-bold">Σ</span><span>汇总计算</span></div>
          <T i="cloud" t="云检查" className="ml-[2px]" />
          <T i="alignG" t="平齐板顶" off />
          <T i="binoc" t="查找图元" />
          <T i="glasses" t="查看钢筋量" />
          <T i="batch" t="批量选择" off />
          <span className="ml-auto mr-[2px] text-[13px] font-bold">»</span>
        </Bar>
        <Bar className="ml-[5px] w-[663px] pl-[3px]">
          <T i="cube" t="三维" caret />
          <T i="top" t="俯视" caret />
          <T i="orbit" t="动态观察" on className="-ml-[2px]" />
          <T i="local" t="局部三维" off className="-ml-[3px]" />
          <Sep />
          <T i="full" t="全屏" className="-ml-[3px]" />
          <T i="zoom" t="缩放" caret />
          <T i="pan" t="平移" caret />
          <T i="rot" t="屏幕旋转" caret />
          <Sep className="-ml-[3px]" />
          <T i="layer" t="选择楼层" className="-ml-[2px]" />
          <span className="ml-auto mr-[2px] text-[13px] font-bold">»</span>
        </Bar>
      </div>

      {/* body */}
      <div className="flex h-[623px] shrink-0">
        <Nav />
        <div className="ml-[5px] flex min-w-0 flex-1 flex-col">
          <div className="flex h-[29px] shrink-0 items-start pl-[635px]">
            <Bar className="w-[402px] pr-[4px] whitespace-nowrap">
              <Select w="w-[58px]" t="不偏移" />
              <Sep />
              <span className="-ml-[6px] shrink-0 text-[#888]">X=</span>
              <Num w="w-[58px] -ml-[5px]" v="0" />
              <span className="-ml-[5px] shrink-0 text-[#888]">mm</span>
              <span className="-ml-[2px] shrink-0 text-[#888]">Y=</span>
              <Num w="w-[58px] -ml-[5px]" v="0" />
              <span className="-ml-[6px] shrink-0 text-[#888]">mm</span>
              <Sep />
              <span className="-ml-[3px] h-[11px] w-[11px] shrink-0 border border-[#999] bg-[#eee]" />
              <span className="ml-[2px] shrink-0">旋转</span>
              <Num w="w-[68px] -ml-[3px]" v="0.000" />
              <span className="-ml-[4px] shrink-0 text-[#888]">°</span>
            </Bar>
          </div>
          <div className="flex h-[28px] shrink-0 items-start pl-[2px]">
            <Bar className="-mt-[1px] w-[789px] gap-[5.800px]">
              <Grip />
              <T i="del" t="删除" off className="-ml-[1px]" />
              <Sep />
              <T i="copy" t="复制" off />
              <T i="mirror" t="镜像" off />
              <Sep />
              <T i="move" t="移动" off />
              <T i="rotG" t="旋转" off />
              <Sep />
              <T i="extend" t="延伸" off />
              <T i="trim" t="修剪" off />
              <Sep />
              <T i="breakI" t="打断" off />
              <T i="merge" t="合并" off />
              <T i="split" t="分割" off />
              <Sep />
              <T i="alignL" t="对齐" off caret tight />
              <T i="offs" t="偏移" off />
              <T i="stretch" t="拉伸" off />
              <Sep />
              <T i="grips" t="设置夹点" off className="-ml-[1px]" />
            </Bar>
          </div>
          <div className="flex h-[28px] shrink-0 items-start pl-[2px]">
            <Bar className="-mt-[1px] w-[565px] pl-[5px]">
              <Select w="w-[60px]" t="基础层" />
              <div className="-ml-[6px]"><Select w="w-[69px]" t="自定义" /></div>
              <div className="-ml-[3px]"><Select w="w-[63px]" t="自定义线" /></div>
              <div className="ml-[1px]"><Select w="w-[68px]" t="ZDYX-18" /></div>
              <Sep className="-ml-[2px]" />
              <T i="prop" t="属性" />
              <T i="edit" t="编辑钢筋" on className="-ml-[2px]" />
              <T i="list" t="构件列表" className="-ml-[4px]" />
              <T i="pick" t="拾取构件" className="ml-[1px]" />
            </Bar>
            <div className="ml-[6px] h-[24px] w-[27px] bg-[#f7f7f7]" />
            <Bar className="-mt-[1px] ml-[74px] w-[422px] pl-[3px]">
              <Grip />
              <T i="two" t="两点" className="-ml-[3px]" />
              <T i="para" t="平行" />
              <T i="ang" t="点角" caret />
              <T i="arc3" t="三点辅轴" caret />
              <T i="delAx" t="删除辅轴" />
              <T i="dim" t="尺寸标注" caret />
            </Bar>
          </div>
          <div className="flex h-[28px] shrink-0 items-start pl-[2px]">
            <Bar className="w-[488px]">
              <Grip />
              <T i="pointer" t="选择" caret className="-ml-[1px]" />
              <Sep />
              <T i="line" t="直线" className="-ml-[3px]" />
              <T i="addLen" t="点加长度" className="ml-[1px]" />
              <T i="arc" t="三点画弧" caret />
              <div className="-ml-[4px]"><Select w="w-[54px]" /></div>
              <T i="rect" t="矩形" />
              <Sep />
              <T i="smart" t="智能布置" caret tight className="-ml-[1px]" />
            </Bar>
          </div>
          <Scene />
          <div className="flex h-[29px] shrink-0 items-center pl-[2px]">
            <Bar className="w-[473px] gap-[5px]">
              <Grip />
              <T i="ortho" t="正交" />
              <div className="-ml-[4px] flex">
                <T i="snap" t="对象捕捉" on />
                <T i="dyn" t="动态输入" on className="ml-[1px]" />
              </div>
              <Grip className="-ml-[1px]" />
              <T i="cross" t="交点" className="-ml-[2px]" />
              <div className="-ml-[3px] flex">
                <T i="perp" t="垂点" on />
                <T i="mid" t="中点" on className="ml-[1px]" />
              </div>
              <T i="vertex" t="顶点" className="-ml-[1px]" />
              <T i="coord" t="坐标" className="ml-[1px]" />
            </Bar>
          </div>
          <GridPanel />
        </div>
      </div>

      {/* status */}
      <div className="flex h-[21px] shrink-0 items-center gap-[3px] whitespace-nowrap">
        {[
          ["w-[147px]", "X=28761 Y=5468", true],
          ["w-[77px]", "层高:3.52m", false],
          ["w-[98px]", "底标高:-3.55m", false],
          ["w-[47px]", "1(1)", true],
          ["w-[912px]", "", false],
          ["w-[72px]", "163.9 FPS", true],
        ].map(([w, t, m], i) => (
          <div key={i} className={`flex h-[20px] items-center border border-[#ddd] bg-[#f5f5f5] pl-[1px] ${w} ${m ? mono : ""}`}>{t}</div>
        ))}
      </div>

      <Taskbar />

      {/* floating: score badge */}
      <div className="absolute left-[1104px] top-[-37px] flex h-[54px] w-[54px] items-end justify-center rounded-full border-2 border-[#e8f2e4] bg-[#3fae3a] pb-[2px] font-bold text-white shadow-[0_2px_4px_rgba(0,0,0,0.45)]">66</div>

      {/* floating: sogou IME bar */}
      <div className="absolute left-[627px] top-[80px] flex h-[24px] items-center">
        <span className="z-10 flex h-[28px] w-[28px] -rotate-6 items-center justify-center rounded-[5px] bg-[#f0562a] text-[24px] font-bold text-white">S</span>
        <div className="-ml-[3px] flex h-[24px] items-center gap-[8px] border border-[#9cc3e6] bg-white pl-[9px] pr-[5px] text-[#1a78c8]">
          <span className="text-[14px] font-bold">中</span>
          <span className="ml-[3px] w-[10px] text-[14px] font-bold">°,</span>
          <Mic size={15} strokeWidth={2.5} className="ml-[1px]" />
          <svg width="17" height="13" viewBox="0 0 17 13"><rect x=".5" y=".5" width="16" height="12" rx="1.500" fill="none" stroke="#1a78c8" /><path d="M3 4h11M3 7h11M5 10h7" stroke="#1a78c8" strokeDasharray="1.500 1" strokeWidth="1.500" /></svg>
          <svg width="15" height="15" viewBox="0 0 15 15"><circle cx="6" cy="3.500" r="3" fill="#b8c4cc" /><path d="M1 14c0-5 2-6 5-6s5 1 5 6z" fill="#b8c4cc" /><rect x="9" y="9" width="6" height="5" fill="#8c9ca8" /></svg>
          <svg width="15" height="14" viewBox="0 0 15 14" className="-ml-[2px]"><path d="M4 1h2c0 2 3 2 3 0h2l4 3-2 3-1-1v8H3V6L2 7 0 4z" fill="#1a78c8" /></svg>
          <svg width="15" height="15" viewBox="0 0 15 15"><path d="M1 14l6-7c-1-3 1-6 5-6l-2 3 2 2 3-2c0 4-3 6-6 5l-6 6z" fill="#1a78c8" /></svg>
        </div>
      </div>

      {/* floating: rebar display panel */}
      <div className="absolute left-[180px] top-[200px] h-[177px] w-[166px] border-2 border-[#9a9a9a] bg-white">
        <div className="flex h-[29px] items-center pl-[7px] text-[#a8a8a8]">钢筋显示控制面板</div>
        <div className="mx-[1px] h-[144px] border border-[#aaa] pt-[2px]">
          {["水平纵筋", "横向钢筋", "显示其它图元", "显示详细公式"].map((t) => (
            <div key={t} className="flex h-[12px] items-center gap-[4px] pl-[2px] text-[12px]">
              <span className="flex h-[10px] w-[10px] shrink-0 items-center justify-center border border-[#888] text-[8px]">
                <svg width="8" height="8" viewBox="0 0 8 8"><path d="M1 4l2 2 4-5" fill="none" stroke="#333" /></svg>
              </span>
              {t}
            </div>
          ))}
        </div>
      </div>
    </div>
  );
}
